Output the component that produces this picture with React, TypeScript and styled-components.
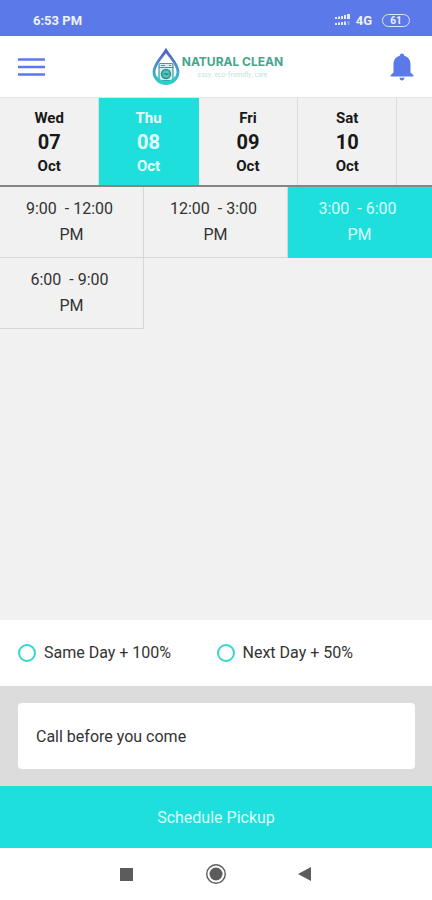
import React, { useState } from "react";
import styled, { createGlobalStyle } from "styled-components";

const blue = "#5b79e8";
const teal = "#1fdfdd";

const GlobalStyle = createGlobalStyle`
  *, *::before, *::after { box-sizing: border-box; }
  body { margin: 0; background: #f1f1f1; }
  body, button, input { font-family: Roboto, "Liberation Sans", sans-serif; }
  button { border: 0; padding: 0; background: none; cursor: pointer; }
`;

const Screen = styled.div`
  display: flex;
  flex-direction: column;
  min-height: 100vh;
  color: #222;
`;

const StatusBar = styled.div`
  display: flex;
  align-items: center;
  justify-content: space-between;
  height: 36px;
  padding: 4px 22px 0 33px;
  background: ${blue};
  color: #eef2ff;
  font-size: 13px;
  font-weight: 700;
`;

const StatusIcons = styled.div`
  display: flex;
  align-items: center;
  gap: 4px;
  font-size: 13px;
`;

const Battery = styled.span`
  display: flex;
  align-items: center;
  justify-content: center;
  width: 28px;
  height: 13px;
  margin-left: 6px;
  border: 1px solid #dfe6ff;
  border-radius: 7px;
  font-size: 10px;
  line-height: 11px;
`;

const Header = styled.header`
  display: flex;
  align-items: center;
  justify-content: space-between;
  height: 61px;
  padding: 0 18px;
  background: #fff;
`;

const IconButton = styled.button`
  display: flex;
  color: ${blue};
`;

const Brand = styled.div`
  display: flex;
  align-items: center;
  gap: 2px;
`;

const BrandText = styled.div`
  display: flex;
  flex-direction: column;
  align-items: center;
`;

const BrandName = styled.span`
  color: #45a68d;
  font-family: Inter, sans-serif;
  font-size: 12px;
  font-weight: 700;
  line-height: 14px;
`;

const Tagline = styled.span`
  color: #c3e2dc;
  font-family: Lato, sans-serif;
  font-size: 7px;
  line-height: 10px;
`;

const DayStrip = styled.div`
  display: flex;
  overflow: hidden;
  border-top: 1px solid #e4e4e4;
  border-bottom: 2px solid #858585;
`;

const Day = styled.button<{ $active?: boolean }>`
  flex: 0 0 23%;
  padding: 8px 0 7px;
  border-right: 1px solid ${(p) => (p.$active ? teal : "#dcdcdc")};
  background: ${(p) => (p.$active ? teal : "#f1f1f1")};
  color: ${(p) => (p.$active ? "#e6ffff" : "#181818")};
  font-weight: 700;
  line-height: 24px;
`;

const DayLine = styled.span<{ $large?: boolean }>`
  display: block;
  font-size: ${(p) => (p.$large ? "20px" : "15px")};
`;

const Slots = styled.div`
  display: grid;
  grid-template-columns: repeat(3, 1fr);
`;

const Slot = styled.button<{ $active?: boolean }>`
  padding: 9px 0;
  border-right: 1px solid ${(p) => (p.$active ? teal : "#d6d6d6")};
  border-bottom: 1px solid ${(p) => (p.$active ? teal : "#d6d6d6")};
  background: ${(p) => (p.$active ? teal : "transparent")};
  color: ${(p) => (p.$active ? "#d8fffc" : "#333")};
  font-size: 16px;
  line-height: 26px;
  white-space: pre;
`;

const Footer = styled.div`
  margin-top: auto;
`;

const Options = styled.div`
  display: grid;
  grid-template-columns: 1fr 1fr;
  align-items: center;
  height: 66px;
  padding: 0 17px 0 18px;
  background: #fff;
`;

const Option = styled.label`
  display: flex;
  align-items: center;
  gap: 8px;
  font-size: 16px;
  line-height: 20px;
  color: #333;
`;

const Radio = styled.input`
  appearance: none;
  width: 18px;
  height: 18px;
  margin: 0;
  border: 2px solid #35d6cc;
  border-radius: 50%;
  &:checked { box-shadow: inset 0 0 0 3px #fff; background: #35d6cc; }
`;

const NoteArea = styled.div`
  padding: 17px 17px 17px 18px;
  background: #dcdcdc;
`;

const Note = styled.input`
  display: block;
  width: 100%;
  height: 66px;
  padding: 0 18px;
  border: 0;
  border-radius: 4px;
  background: #fff;
  color: #333;
  font-size: 16px;
`;

const Submit = styled.button`
  display: block;
  width: 100%;
  height: 62px;
  padding-top: 2px;
  background: ${teal};
  color: #d8fffc;
  font-size: 16px;
  line-height: 20px;
`;

const NavBar = styled.nav`
  display: flex;
  align-items: center;
  justify-content: center;
  gap: 68px;
  height: 52px;
  background: #fff;
`;

const NavButton = styled.button`
  display: flex;
`;

const days = [
  ["Wed", "07", "Oct"],
  ["Thu", "08", "Oct"],
  ["Fri", "09", "Oct"],
  ["Sat", "10", "Oct"],
];

const slots = ["9:00  - 12:00", "12:00  - 3:00", "3:00  - 6:00", "6:00  - 9:00"];

const SignalIcon = () => (
  <svg width="18" height="14" viewBox="0 0 18 14" fill="#e6ebff" aria-hidden="true">
    <path d="M1 4h2v2H1zM4 3.500h2V6H4zM7 3h2v3H7zM10 2h2v4h-2zM13 1h3v5h-3z" />
    <path d="M1 10h2v2H1zM4 9.500h2V12H4zM7 9h2v3H7zM10 8.500h2V12h-2z" />
    <path d="M13.500 8h2v4h-2z" opacity=".35" />
  </svg>
);

const MenuIcon = () => (
  <svg width="27" height="20" viewBox="0 0 27 20" fill="none" stroke={blue} strokeWidth="2.600" aria-hidden="true">
    <path d="M0 2.500h27M0 10h27M0 17.500h27" />
  </svg>
);

const BellIcon = () => (
  <svg width="24" height="28" viewBox="0 0 24 28" fill="currentColor" aria-hidden="true">
    <path d="M12 .5c1.400 0 2.200 1 2.200 2.300 4 1 6.300 4.200 6.300 8.400v8.300l2.900 2.800v1.200H.6v-1.200l2.900-2.800v-8.300c0-4.200 2.300-7.400 6.300-8.400C9.800 1.500 10.600.5 12 .5z" />
    <path d="M9.500 24.800h5c0 1.500-1.100 2.600-2.500 2.600s-2.500-1.100-2.500-2.600z" />
  </svg>
);

const DropIcon = () => (
  <svg width="28" height="38" viewBox="0 0 28 38" fill="none" aria-hidden="true">
    <defs>
      <linearGradient id="drop" x1="0" y1="0" x2="0" y2="1">
        <stop offset="0" stopColor="#4b62c9" />
        <stop offset=".45" stopColor="#4a8fcb" />
        <stop offset="1" stopColor="#2bd0cb" />
      </linearGradient>
    </defs>
    <path d="M14 2.500C10 9.500 2 16 2 24a12 11.500 0 0 0 24 0C26 16 18 9.500 14 2.500z" stroke="url(#drop)" strokeWidth="2.800" />
    <rect x="7" y="15.500" width="14" height="17" rx="1.500" fill="#d5efed" stroke="#3b9d9d" strokeWidth="1.200" />
    <path d="M7 19.500h14M9 17.500h4M17 17.500h2" stroke="#3b9d9d" strokeWidth="1.200" />
    <circle cx="14" cy="26" r="4.500" fill="#55c1b7" stroke="#278f91" strokeWidth="1.400" />
    <path d="M11.500 26c1.500-1.500 3 1.500 5 0" stroke="#176f79" />
    <path d="M4 27c3 4 6 6 10 6s7-2 10-6c-1 5-5 8-10 8s-9-3-10-8z" fill="#2bd0cb" />
  </svg>
);

export default function App() {
  const [day, setDay] = useState(1);
  const [slot, setSlot] = useState(2);

  return (
    <>
      <GlobalStyle />
      <Screen>
        <StatusBar>
          <span>6:53 PM</span>
          <StatusIcons>
            <SignalIcon />
            <span>4G</span>
            <Battery>61</Battery>
          </StatusIcons>
        </StatusBar>
        <Header>
          <IconButton aria-label="Menu"><MenuIcon /></IconButton>
          <Brand>
            <DropIcon />
            <BrandText>
              <BrandName>NATURAL CLEAN</BrandName>
              <Tagline>easy, eco-friendly, care</Tagline>
            </BrandText>
          </Brand>
          <IconButton aria-label="Notifications"><BellIcon /></IconButton>
        </Header>
        <DayStrip>
          {days.map(([name, date, month], i) => (
            <Day key={date} $active={i === day} aria-pressed={i === day} onClick={() => setDay(i)}>
              <DayLine>{name}</DayLine>
              <DayLine $large>{date}</DayLine>
              <DayLine>{month}</DayLine>
            </Day>
          ))}
        </DayStrip>
        <Slots>
          {slots.map((time, i) => (
            <Slot key={time} $active={i === slot} aria-pressed={i === slot} onClick={() => setSlot(i)}>
              {time + " \nPM"}
            </Slot>
          ))}
        </Slots>
        <Footer>
          <Options>
            <Option><Radio type="radio" name="speed" value="same" />Same Day + 100%</Option>
            <Option><Radio type="radio" name="speed" value="next" />Next Day + 50%</Option>
          </Options>
          <NoteArea>
            <Note type="text" aria-label="Pickup note" defaultValue="Call before you come" />
          </NoteArea>
          <Submit>Schedule Pickup</Submit>
          <NavBar aria-label="System">
            <NavButton aria-label="Recent apps">
              <svg width="22" height="22" viewBox="0 0 22 22"><path d="M5 5h13v13H5z" fill="#5c5c5c" /></svg>
            </NavButton>
            <NavButton aria-label="Home">
              <svg width="22" height="22" viewBox="0 0 22 22">
                <circle cx="11" cy="11" r="9.300" fill="none" stroke="#5c5c5c" strokeWidth="1.400" />
                <circle cx="11" cy="11" r="6.500" fill="#5c5c5c" />
              </svg>
            </NavButton>
            <NavButton aria-label="Back">
              <svg width="22" height="22" viewBox="0 0 22 22"><path d="M16 4v14L3 11z" fill="#5c5c5c" /></svg>
            </NavButton>
          </NavBar>
        </Footer>
      </Screen>
    </>
  );
}
